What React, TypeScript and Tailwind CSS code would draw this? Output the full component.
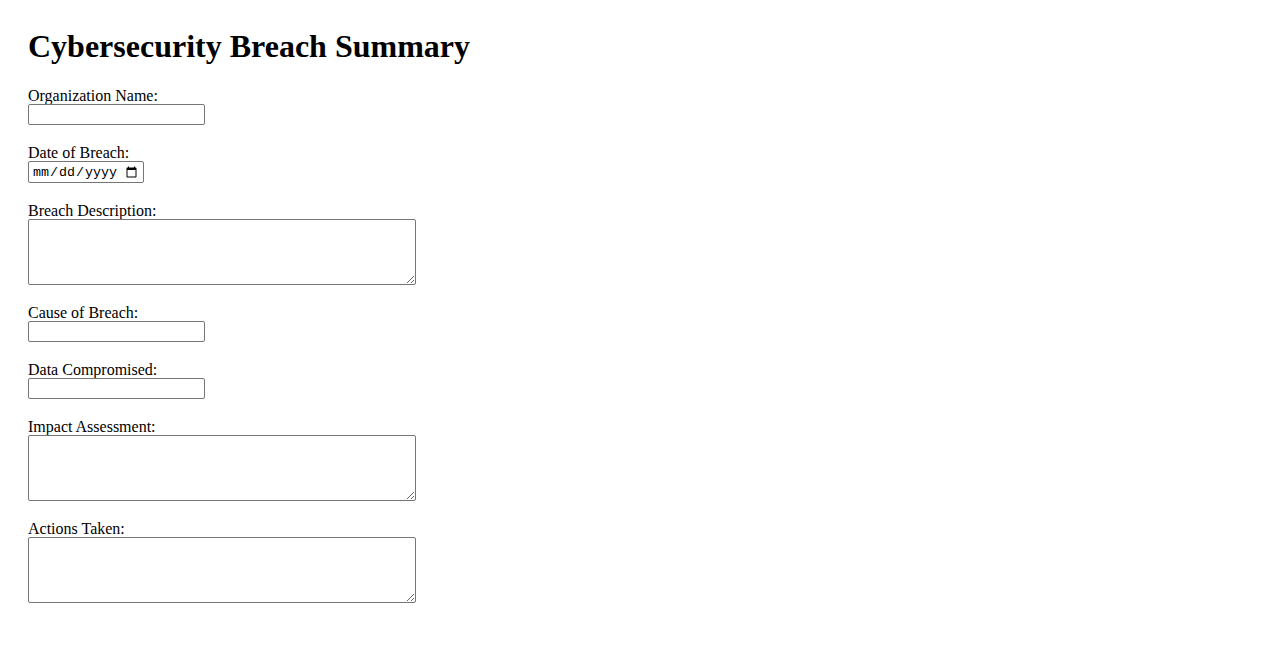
import React from 'react';

const serif = { fontFamily: '"Liberation Serif", "Times New Roman", serif' };

const fields: { label: string; kind: 'text' | 'date' | 'area' }[] = [
  { label: 'Organization Name:', kind: 'text' },
  { label: 'Date of Breach:', kind: 'date' },
  { label: 'Breach Description:', kind: 'area' },
  { label: 'Cause of Breach:', kind: 'text' },
  { label: 'Data Compromised:', kind: 'text' },
  { label: 'Impact Assessment:', kind: 'area' },
  { label: 'Actions Taken:', kind: 'area' },
];

const App: React.FC = () => {
  return (
    <div className="min-h-screen bg-white text-black pl-[28px] pt-[28px]" style={serif}>
      <h1 className="text-[32px] leading-[37px] font-bold mb-[21px]">Cybersecurity Breach Summary</h1>
      <form className="flex flex-col items-start">
        {fields.map((f) => (
          <div key={f.label} className="flex flex-col items-start mb-[18px]">
            <label className="block h-[18px] text-[16px] leading-[20px]">{f.label}</label>
            {f.kind === 'text' && (
              <input
                type="text"
                className="block w-[177px] h-[21px] border border-[#767676] rounded-[2px] bg-white px-[2px] text-[13px] outline-none"
              />
            )}
            {f.kind === 'date' && (
              <input
                type="date"
                className="block w-[116px] h-[22px] border border-[#767676] rounded-[2px] bg-white pl-[3px] pr-[3px] pt-[2px] text-[13.33px] outline-none"
                style={{ fontFamily: '"Liberation Mono", "Courier New", monospace' }}
              />
            )}
            {f.kind === 'area' && (
              <textarea
                className="block w-[388px] h-[66px] border border-[#767676] rounded-[2px] bg-white p-[2px] text-[13px] outline-none"
              />
            )}
          </div>
        ))}
      </form>
    </div>
  );
};

export default App;
